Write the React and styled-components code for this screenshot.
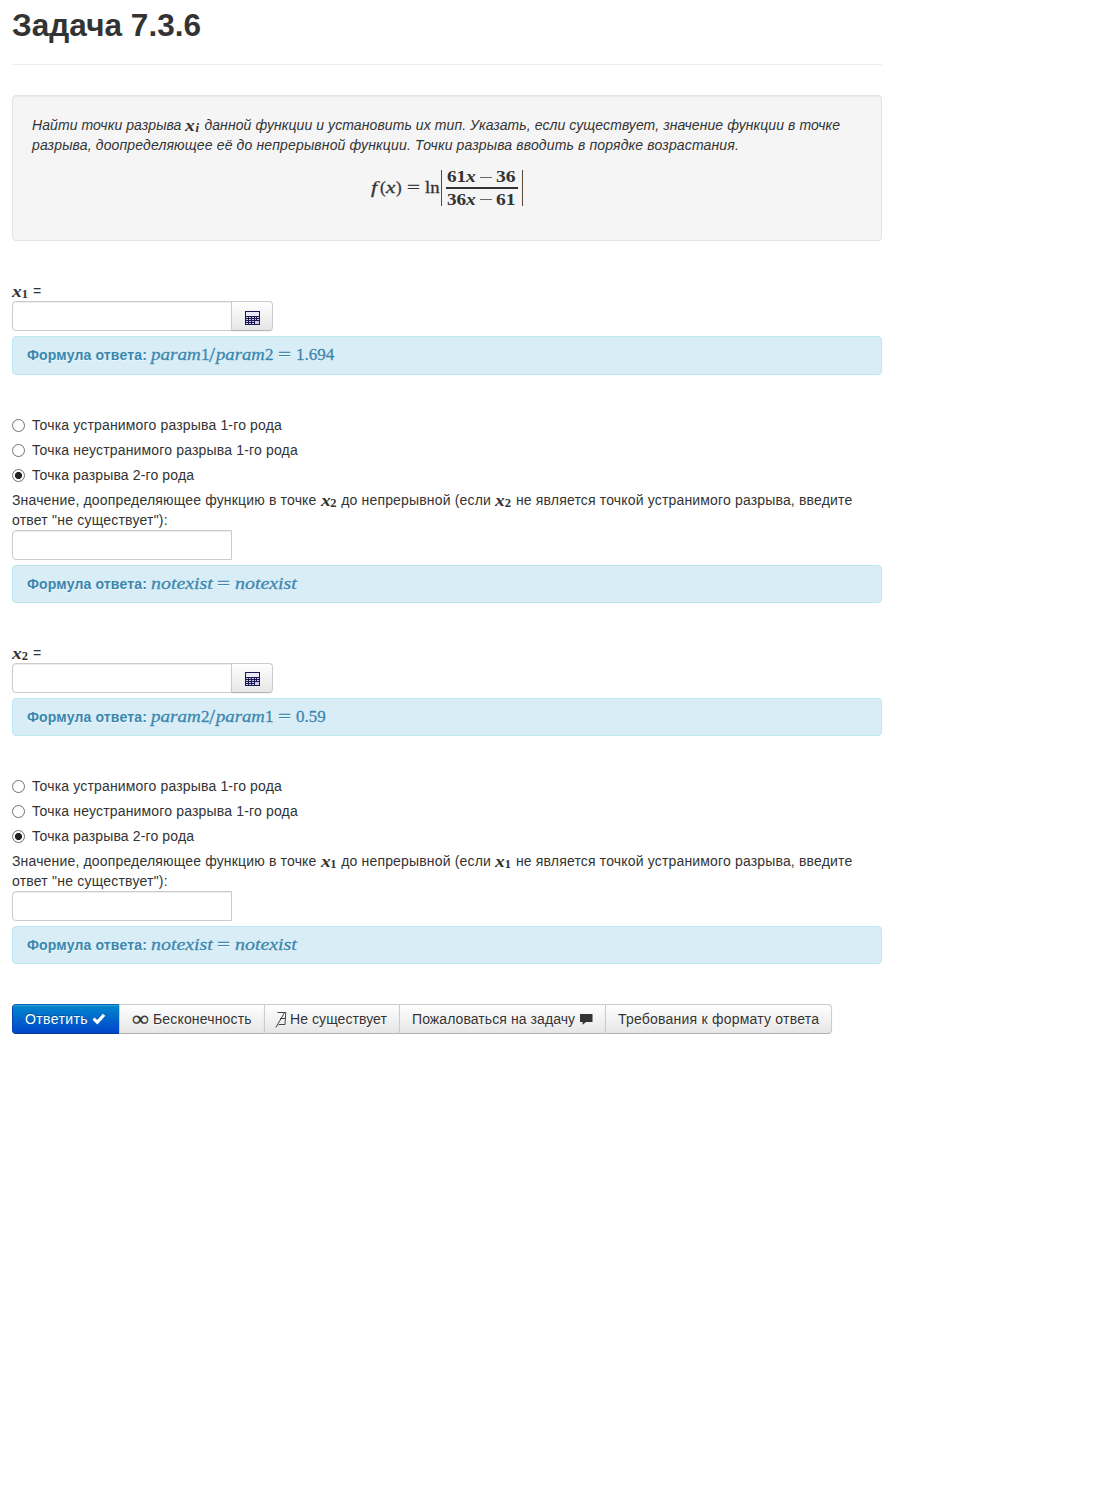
import React from 'react';
import styled, { createGlobalStyle, css } from 'styled-components';

const Global = createGlobalStyle`
  * { box-sizing: border-box; }
  body {
    margin: 0;
    background: #fff;
    color: #333;
    font: 14px/20px "Liberation Sans", Arial, sans-serif;
  }
`;

const Page = styled.main`
  width: 870px;
  margin-left: 12px;
  padding-top: 5px;
`;

const Title = styled.h1`
  margin: 0;
  height: 60px;
  font-size: 31.5px;
  line-height: 40px;
  font-weight: bold;
  letter-spacing: 0.04px;
  border-bottom: 1px solid #eee;
`;

const Well = styled.section`
  height: 146px;
  margin-top: 30px;
  padding: 19px;
  border: 1px solid #e3e3e3;
  border-radius: 4px;
  background: #f5f5f5;
  box-shadow: inset 0 1px 1px rgba(0, 0, 0, 0.05);
`;

const Line = styled.div`
  height: 20px;
  white-space: nowrap;
  font-style: ${(p) => (p.$italic ? 'italic' : 'normal')};
  letter-spacing: ${(p) => p.$track || 0}px;
`;

const MathText = styled.span`
  display: flex;
  height: 20px;
  font: 17px/20px "Liberation Serif", "Times New Roman", serif;
  white-space: nowrap;
  -webkit-text-stroke: 0.3px currentColor;
`;

const Seg = styled.span`
  flex: none;
  width: ${(p) => p.$w}px;
  font-size: ${(p) => p.$size || 17}px;
  font-style: ${(p) => (p.$italic ? 'italic' : 'normal')};
  font-weight: ${(p) => (p.$bold ? 'bold' : 'inherit')};
  transform: scaleX(${(p) => p.$x || 1});
  transform-origin: left;
`;

const VarBox = styled.span`
  display: inline-flex;
  width: 16px;
  margin-right: ${(p) => p.$after || 0}px;
  height: 20px;
  vertical-align: top;
  letter-spacing: 0;
  font: italic bold 17px/21px "Liberation Serif", "Times New Roman", serif;
`;

const VarName = styled.span`
  width: 10px;
  transform: scaleX(1.15);
  transform-origin: left;
`;

const Sub = styled.sub`
  padding-top: 4px;
  padding-left: ${(p) => (p.$italic ? 0 : 0.5)}px;
  font-size: 12.5px;
  font-weight: bold;
  font-style: ${(p) => (p.$italic ? 'italic' : 'normal')};
  line-height: 19px;
`;

const Formula = styled.div`
  display: flex;
  align-items: center;
  width: 152px;
  height: 38px;
  margin: 14px 0 0 339px;
  font: 17px/20px "Liberation Serif", "Times New Roman", serif;
  white-space: nowrap;
  -webkit-text-stroke: 0.3px #333;
`;

const Fraction = styled.span`
  display: flex;
  flex-direction: column;
  align-items: center;
  width: 82px;
  height: 36px;
  padding: 0 4px;
  border-left: 1px solid #5a4a3c;
  border-right: 1px solid #5a4a3c;
  -webkit-text-stroke: 0;
`;

const Half = styled.span`
  display: flex;
  width: 70px;
  height: 17px;
  line-height: ${(p) => (p.$bottom ? 21 : 13)}px;
`;

const Minus = styled.span`
  flex: none;
  width: 12px;
  height: 1px;
  margin: ${(p) => (p.$bottom ? 10 : 7)}px 4px 0 4px;
  background: #666;
`;

const Rule = styled.span`
  flex: none;
  width: 72px;
  height: 2px;
  background: #333;
`;

const Label = styled.div`
  display: flex;
  height: 20px;
  margin-top: 40px;
`;

const InputRow = styled.div`
  display: flex;
  height: 30px;
`;

const Input = styled.input`
  width: 220px;
  height: 30px;
  padding: 4px 6px;
  border: 1px solid #ccc;
  border-radius: 4px 0 0 4px;
  background: #fff;
  box-shadow: inset 0 1px 1px rgba(0, 0, 0, 0.075);
  outline: none;
`;

const buttonFace = css`
  border: 1px solid #ccc;
  border-bottom-color: #b3b3b3;
  background: linear-gradient(#fff, #e6e6e6);
  box-shadow: inset 0 1px 0 rgba(255, 255, 255, 0.2), 0 1px 2px rgba(0, 0, 0, 0.05);
  color: #333;
`;

const CalcButton = styled.button`
  display: flex;
  align-items: center;
  justify-content: center;
  width: 42px;
  height: 30px;
  margin-left: -1px;
  padding: ${(p) => p.$drop}px 0 0;
  ${buttonFace}
  border-radius: 0 4px 4px 0;
`;

const Alert = styled.div`
  display: flex;
  height: ${(p) => p.$h || 38}px;
  margin-top: 5px;
  padding: 8px 14px;
  border: 1px solid #bce8f1;
  border-radius: 4px;
  background: #d9edf7;
  color: #3a87ad;
  text-shadow: 0 1px 0 rgba(255, 255, 255, 0.5);
`;

const AlertLabel = styled.b`
  width: 124px;
  letter-spacing: 0.16px;
  white-space: nowrap;
`;

const Radios = styled.div`
  display: flex;
  flex-direction: column;
  gap: 5px;
  margin: 40px 0 5px;
`;

const RadioLabel = styled.label`
  display: flex;
  align-items: center;
  gap: 7px;
  height: 20px;
  letter-spacing: ${(p) => p.$track || 0}px;
`;

const Dot = styled.input`
  appearance: none;
  width: 13px;
  height: 13px;
  margin: 1px 0 0;
  border: 1px solid #707070;
  border-radius: 50%;
  background: ${(p) => (p.checked ? 'radial-gradient(circle, #222 0 3.2px, #fff 3.9px)' : '#fff')};
`;

const Toolbar = styled.div`
  display: flex;
  height: 30px;
  margin-top: 40px;
`;

const Button = styled.button`
  display: flex;
  align-items: center;
  justify-content: flex-start;
  flex: none;
  width: ${(p) => p.$w}px;
  height: 30px;
  margin-left: -1px;
  padding: 0 0 0 ${(p) => p.$pad || 12}px;
  font: 14px/20px "Liberation Sans", Arial, sans-serif;
  letter-spacing: ${(p) => p.$track || 0}px;
  white-space: nowrap;
  text-shadow: 0 1px 1px rgba(255, 255, 255, 0.75);
  ${buttonFace}
  &:first-child { margin-left: 0; border-radius: 4px 0 0 4px; }
  &:last-child { border-radius: 0 4px 4px 0; }
  ${(p) => p.$primary && css`
    border-color: #0063b5 #0044b0 #003a94;
    background: linear-gradient(#08c, #04c);
    color: #fff;
    text-shadow: 0 -1px 0 rgba(0, 0, 0, 0.25);
  `}
  svg { flex: none; }
`;

const InfinitySign = styled.span`
  width: 21px;
  margin-left: -2px;
  margin-right: 2px;
  font: 22px/20px "Liberation Serif", serif;
  letter-spacing: 0;
  transform: scaleX(1.08);
  -webkit-text-stroke: 0.3px #333;
`;

const CalcIcon = () => (
  <svg width="15" height="14" viewBox="0 0 15 14" shapeRendering="crispEdges">
    <rect width="15" height="14" fill="#1b174f" />
    <rect x="1" y="1" width="13" height="4" fill="#e9e9fa" />
    {[6, 8, 10, 12].map((y) => [1, 4, 7, 10, 12].map((x) => (
      <rect key={`${x}-${y}`} x={x} y={y} width={x === 10 ? 1 : 2} height="1" fill="#cfcfee" />
    )))}
    <rect x="10" y="10" width="4" height="3" fill="#c9c9ec" />
  </svg>
);

const Variable = ({ sub, italic, after }) => (
  <VarBox $after={after}><VarName>x</VarName><Sub $italic={italic}>{sub}</Sub></VarBox>
);

const Ratio = ({ top, bottom, value }) => (
  <MathText>
    <Seg $w={50} $x={1.12} $italic>param</Seg>
    <Seg $w={8}>{top}</Seg>
    <Seg $w={7} $size={20} $x={1.1}>/</Seg>
    <Seg $w={49} $x={1.1} $italic>param</Seg>
    <Seg $w={13}>{bottom}</Seg>
    <Seg $w={18} $x={1.35}>=</Seg>
    <Seg $w={39}>{value}</Seg>
  </MathText>
);

const options = [
  ['Точка устранимого разрыва 1-го рода', 0.16],
  ['Точка неустранимого разрыва 1-го рода', 0.165],
  ['Точка разрыва 2-го рода', 0.13],
];

function Question({ index, other, value, alertHeight, iconDrop }) {
  return (
    <section>
      <Label><Variable sub={index} after={5} />=</Label>
      <InputRow>
        <Input />
        <CalcButton $drop={iconDrop}><CalcIcon /></CalcButton>
      </InputRow>
      <Alert $h={alertHeight}>
        <AlertLabel>Формула ответа:</AlertLabel>
        <Ratio top={index} bottom={other} value={value} />
      </Alert>
      <Radios>
        {options.map(([text, track], i) => (
          <RadioLabel key={text} $track={track}>
            <Dot type="radio" name={`kind-${index}`} checked={i === 2} readOnly />
            {text}
          </RadioLabel>
        ))}
      </Radios>
      <Line $track={0.165}>
        Значение, доопределяющее функцию в точке <Variable sub={other} after={0.6} /> до непрерывной (если <Variable sub={other} after={0.8} /> не является точкой устранимого разрыва, введите
      </Line>
      <Line $track={0.21}>ответ "не существует"):</Line>
      <InputRow><Input /></InputRow>
      <Alert>
        <AlertLabel>Формула ответа:</AlertLabel>
        <MathText>
          <Seg $w={66} $x={1.17} $italic>notexist</Seg>
          <Seg $w={18} $x={1.35}>=</Seg>
          <Seg $w={62} $x={1.17} $italic>notexist</Seg>
        </MathText>
      </Alert>
    </section>
  );
}

export default function App() {
  return (
    <>
      <Global />
      <Page>
        <Title>Задача 7.3.6</Title>
        <Well>
          <Line $italic $track={0.085}>
            Найти точки разрыва <Variable sub="i" italic after={-1} /> данной функции и установить их тип. Указать, если существует, значение функции в точке
          </Line>
          <Line $italic $track={0.147}>разрыва, доопределяющее её до непрерывной функции. Точки разрыва вводить в порядке возрастания.</Line>
          <Formula>
            <Seg $w={9} $x={1.3} $italic>f</Seg>
            <Seg $w={6}>(</Seg>
            <Seg $w={10} $x={1.25} $italic>x</Seg>
            <Seg $w={11}>)</Seg>
            <Seg $w={18} $x={1.35}>=</Seg>
            <Seg $w={16} $x={1.1}>ln</Seg>
            <Fraction>
              <Half>
                <Seg $w={19} $x={1.13} $bold>61</Seg>
                <Seg $w={10} $x={1.15} $bold $italic>x</Seg>
                <Minus />
                <Seg $w={20} $x={1.15} $bold>36</Seg>
              </Half>
              <Rule />
              <Half $bottom>
                <Seg $w={19} $x={1.13} $bold>36</Seg>
                <Seg $w={10} $x={1.15} $bold $italic>x</Seg>
                <Minus $bottom />
                <Seg $w={20} $x={1.15} $bold>61</Seg>
              </Half>
            </Fraction>
          </Formula>
        </Well>
        <Question index="1" other="2" alertHeight={39} iconDrop={3} value="1.694" />
        <Question index="2" other="1" iconDrop={2} value="0.59" />
        <Toolbar>
          <Button $primary $w={108} $track={0.38}>
            Ответить
            <svg width="14" height="12" viewBox="0 0 14 12" style={{ marginLeft: 4 }}>
              <path d="M.5 6.7 2.6 4.6 5.2 7 10.9.8 13.3 2.8 5.4 11.5Z" fill="#fff" />
            </svg>
          </Button>
          <Button $w={146} $track={0.16}>
            <InfinitySign>∞</InfinitySign>
            Бесконечность
          </Button>
          <Button $w={136} $pad={10} $track={0.07}>
            <svg width="12" height="17" viewBox="0 0 12 17" style={{ marginRight: 3 }} fill="none" stroke="#444">
              <path d="M2.5 1.5H10.8L10 13.5H3.6M5 7.5H10.4" />
              <path d="M9.6 1.5 .8 16.5" />
            </svg>
            Не существует
          </Button>
          <Button $w={207} $track={0.08}>
            Пожаловаться на задачу
            <svg width="13" height="12" viewBox="0 0 13 12" style={{ marginLeft: 5 }}>
              <path d="M0 1H12.5V9H6L2.6 11.8V9H0Z" fill="#333" />
            </svg>
          </Button>
          <Button $w={227} $track={0.22}>Требования к формату ответа</Button>
        </Toolbar>
      </Page>
    </>
  );
}
